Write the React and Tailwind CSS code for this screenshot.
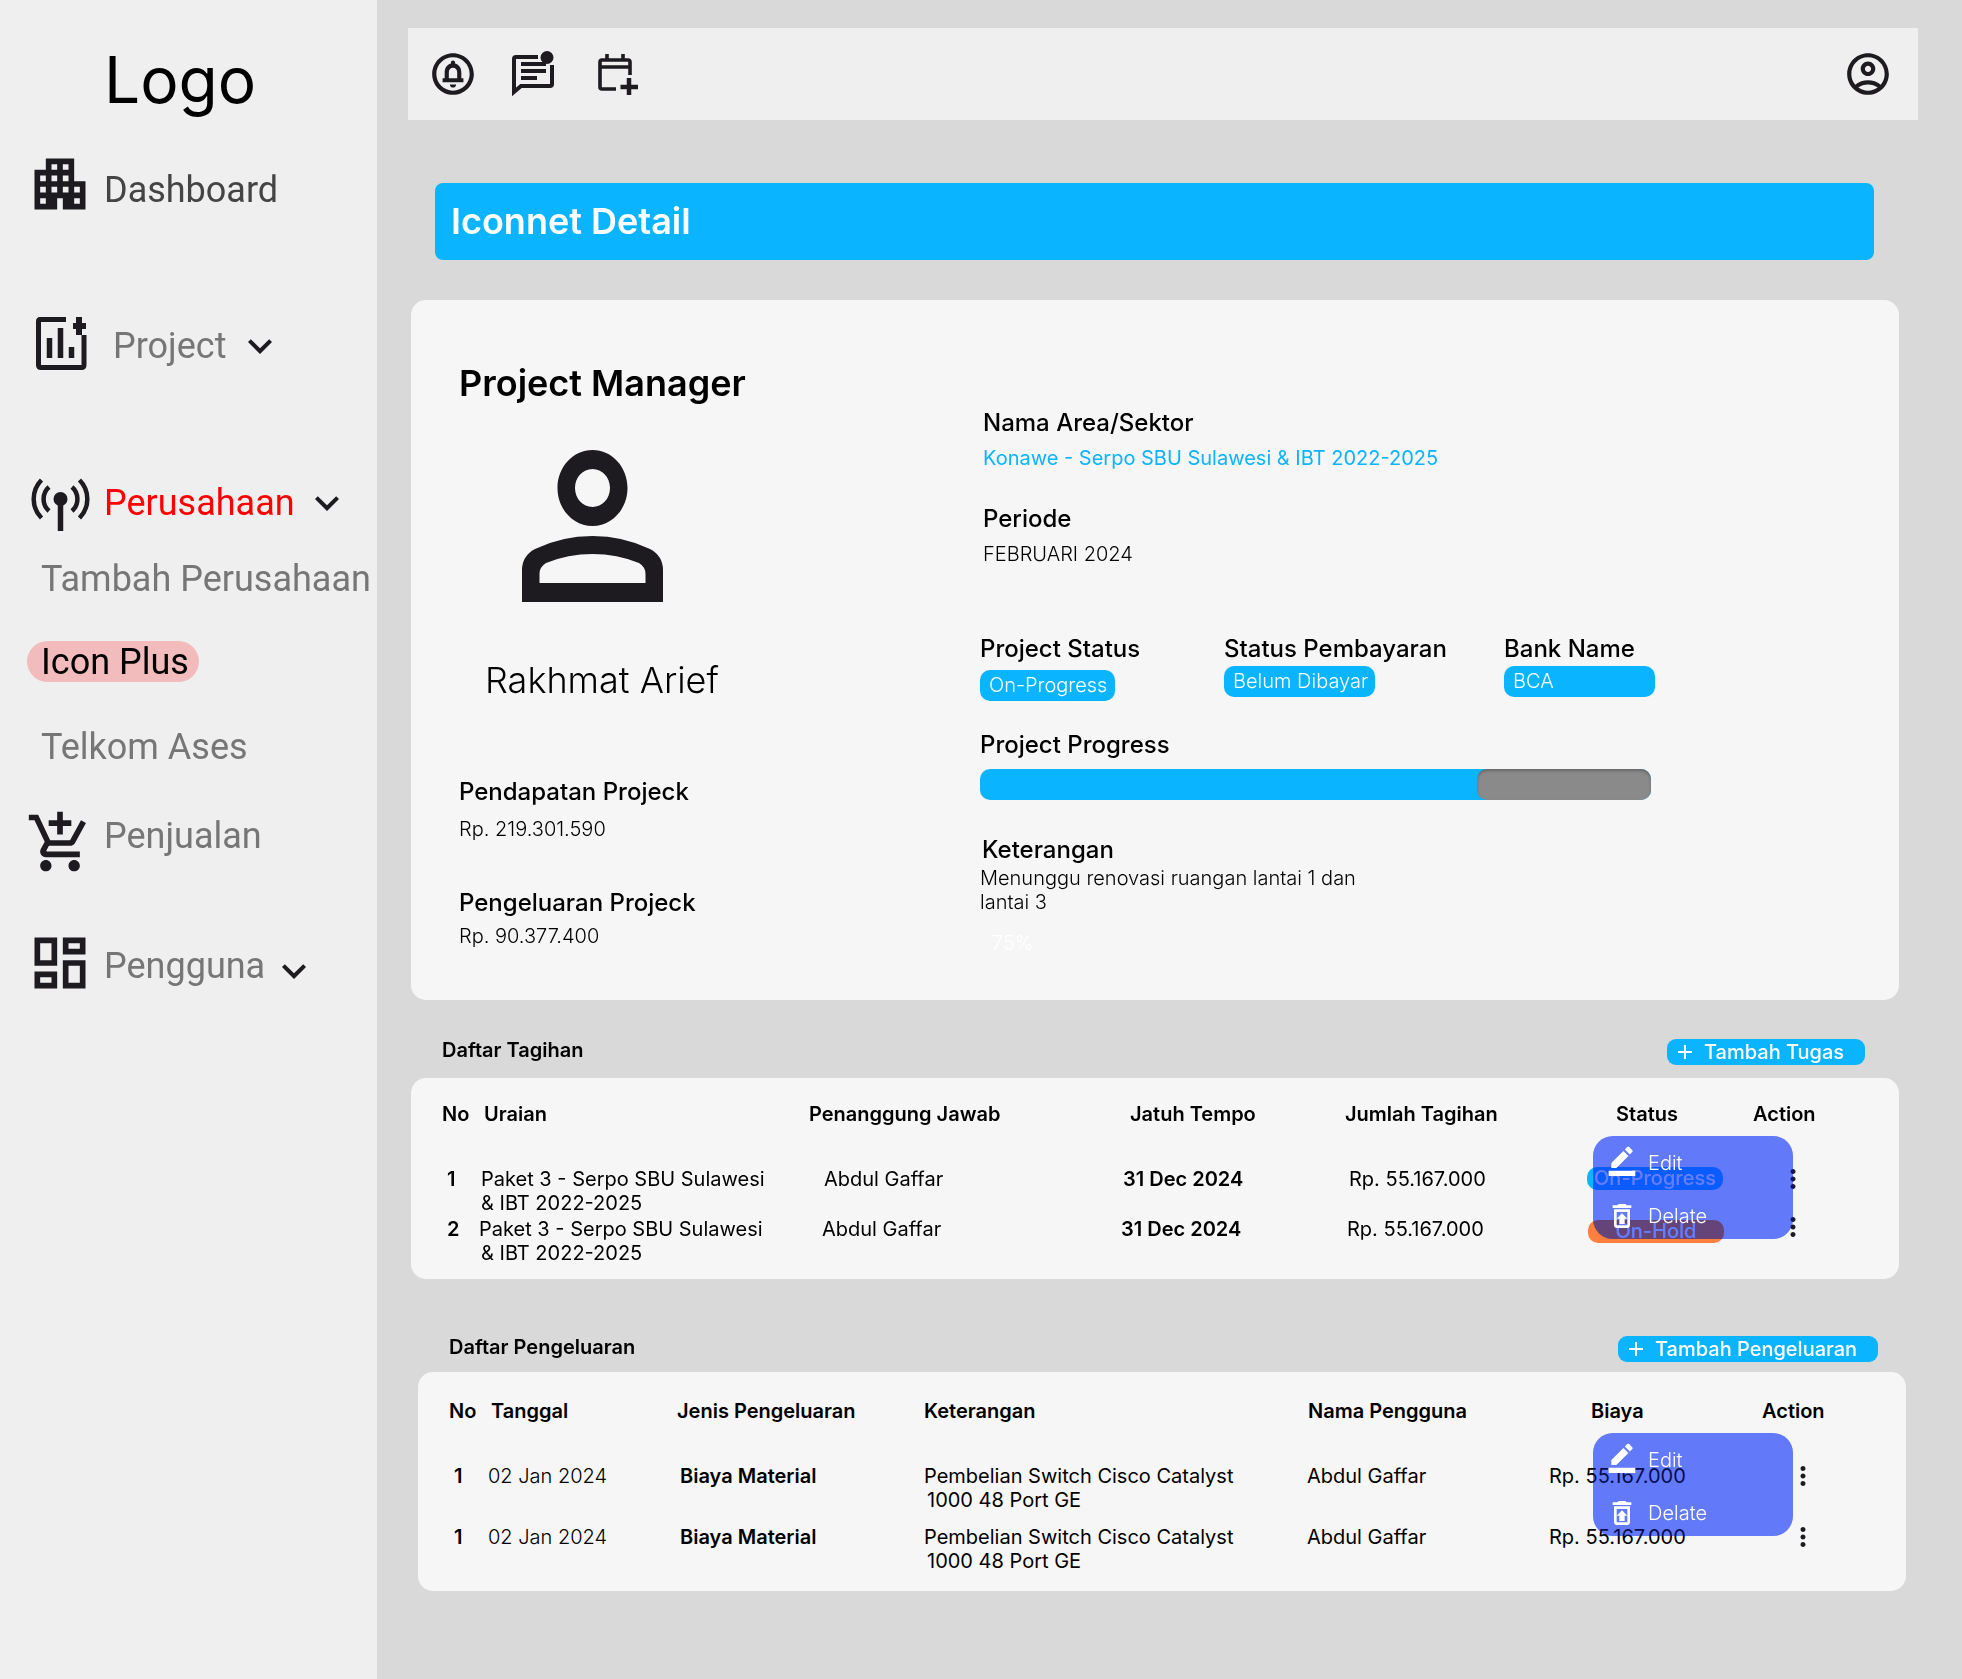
import React from 'react';
import {
  MdApartment,
  MdAddShoppingCart,
  MdOutlineDashboard,
  MdKeyboardArrowDown,
  MdOutlineCircleNotifications,
  MdOutlineAccountCircle,
  MdAdd,
  MdMoreVert,
  MdBorderColor,
  MdOutlineRestoreFromTrash,
} from 'react-icons/md';

const ICON = '#1d1b20';

const ChartAddIcon = () => (
  <svg width="68" height="68" viewBox="0 0 68 68" fill="none" stroke={ICON} className="shrink-0">
    <path d="M40 10.500H14Q12.500 10.500 12.500 12.500V56Q12.500 58.500 15 58.500H55.500Q58 58.500 58 56V26" strokeWidth="5" />
    <path d="M23.500 29V49M34.500 19V49M45.500 38V49" strokeWidth="5.500" />
    <path d="M53 8V26M47 17H60" strokeWidth="6" />
  </svg>
);

const AntennaIcon = () => (
  <svg width="68" height="68" viewBox="-6 -7 68 68" fill="none" stroke={ICON} strokeWidth="4.500" className="shrink-0">
    <path d="M9.500 3A27 27 0 0 0 9.500 41M47.500 3A27 27 0 0 1 47.500 41" />
    <path d="M17 10A16 16 0 0 0 17 34M40 10A16 16 0 0 1 40 34" />
    <circle cx="28.500" cy="22" r="7" fill={ICON} stroke="none" />
    <path d="M28.500 24V54" strokeWidth="5.500" />
  </svg>
);

const NavRow = ({ icon, label, top, chevron }) => (
  <div className={`flex items-center ml-[26px] h-[68px] ${top}`}>
    {icon}
    {label}
    {chevron && <MdKeyboardArrowDown size={48} color={ICON} className={`shrink-0 ${chevron}`} />}
  </div>
);

const Sidebar = () => (
  <aside className="w-[377px] shrink-0 bg-[#efefef] pt-[41px]">
    <div className="ml-[104px] text-[64px] leading-[78px] text-black">Logo</div>
    <div className="font-['Roboto',sans-serif]">
      <NavRow icon={<MdApartment size={68} color={ICON} className="shrink-0" />} top="mt-[31px]" label={<span className="ml-[10px] mt-[12px] text-[36px] leading-[44px] text-[#444444]">Dashboard</span>} />
      <NavRow icon={<ChartAddIcon />} top="mt-[91px]" chevron="ml-[10px] mt-[6px]" label={<span className="ml-[19px] mt-[6px] text-[36px] leading-[44px] text-[#767676]">Project</span>} />
      <NavRow icon={<AntennaIcon />} top="mt-[93px]" chevron="ml-[8px] mt-[-3px]" label={<span className="ml-[10px] mt-[-3px] text-[36px] leading-[44px] text-[#ff0000]">Perusahaan</span>} />
      <div className="ml-[41px] mt-[19px] text-[36px] leading-[44px] text-[#767676] whitespace-nowrap">Tambah Perusahaan</div>
      <div className="ml-[27px] mt-[40px] w-[172px] h-[41px] rounded-full bg-[#f2bcbc] px-[14px] text-[36px] leading-[43px] text-black whitespace-nowrap">Icon Plus</div>
      <div className="ml-[41px] mt-[43px] text-[36px] leading-[44px] text-[#767676]">Telkom Ases</div>
      <NavRow icon={<MdAddShoppingCart size={68} color={ICON} className="shrink-0" />} top="mt-[40px]" label={<span className="ml-[10px] mt-[-14px] text-[36px] leading-[44px] text-[#767676]">Penjualan</span>} />
      <NavRow icon={<MdOutlineDashboard size={68} color={ICON} className="shrink-0" />} top="mt-[52px]" chevron="ml-[5px] mt-[16px]" label={<span className="ml-[10px] mt-[6px] text-[36px] leading-[44px] text-[#767676]">Pengguna</span>} />
    </div>
  </aside>
);

const CommentIcon = () => (
  <svg width="42" height="46" viewBox="0 0 42 46" fill="none" stroke={ICON} className="ml-[34px] shrink-0">
    <path d="M26 6H4Q2 6 2 8V41L9 35H38Q40 35 40 33V14" strokeWidth="4" />
    <path d="M9 13H34M9 20H34M9 27H25" strokeWidth="4" />
    <circle cx="35" cy="6.500" r="6.500" fill={ICON} stroke="none" />
  </svg>
);

const CalendarIcon = () => (
  <svg width="40" height="42" viewBox="0 0 40 42" fill="none" stroke={ICON} strokeWidth="3.600" className="ml-[44px] shrink-0">
    <path d="M18 36H4Q2 36 2 34V9Q2 7 4 7H30Q32 7 32 9V22" />
    <path d="M2 14H32M9 1V7M25 1V7" />
    <path d="M31 25V42M22.500 34H40" strokeWidth="4.500" />
  </svg>
);

const Topbar = () => (
  <div className="ml-[31px] mt-[28px] w-[1510px] h-[92px] bg-[#efefef] flex items-center pl-[20px] pr-[25px]">
    <MdOutlineCircleNotifications size={50} color={ICON} className="shrink-0" />
    <CommentIcon />
    <CalendarIcon />
    <MdOutlineAccountCircle size={50} color={ICON} className="ml-auto shrink-0" />
  </div>
);

const Avatar = () => (
  <svg width="141" height="152" viewBox="0 0 141 152" fill={ICON} fillRule="evenodd" className="ml-[63px] mt-[45px]">
    <path d="M70.500 0C90 0 105.500 17 105.500 38S90 76 70.500 76 35.500 59 35.500 38 51 0 70.500 0ZM70.500 19C60.800 19 53 27.500 53 38S60.800 57 70.500 57 88 48.500 88 38 80.200 19 70.500 19Z" />
    <path d="M0 152V120Q0 106 13 99Q40 86 70.500 86Q101 86 128 99Q141 106 141 120V152ZM17.500 133H123.500V124Q123.500 117 117 113Q95 104 70.500 104Q46 104 24 113Q17.500 117 17.500 124Z" />
  </svg>
);

const Label = ({ children, className = '' }) => (
  <div className={`text-[24px] leading-[28px] font-medium text-black ${className}`}>{children}</div>
);

const Value = ({ children, className = '' }) => (
  <div className={`text-[20px] leading-[24px] ${className}`}>{children}</div>
);

const Pill = ({ children, className = '' }) => (
  <div className={`h-[31px] rounded-[10px] bg-[#0ab4ff] pl-[9px] text-[20px] leading-[31px] font-light text-white ${className}`}>{children}</div>
);

const DetailCard = () => (
  <div className="ml-[34px] mt-[40px] w-[1488px] h-[700px] rounded-[15px] bg-[#f6f6f6] flex">
    <div className="w-[569px] pl-[48px] pt-[61px]">
      <div className="text-[36px] leading-[44px] font-semibold text-black">Project Manager</div>
      <Avatar />
      <div className="ml-[26px] mt-[56px] text-[36px] leading-[44px] font-light text-black">Rakhmat Arief</div>
      <Label className="mt-[76px]">Pendapatan Projeck</Label>
      <Value className="mt-[11px] font-light text-black">Rp. 219.301.590</Value>
      <Label className="mt-[48px]">Pengeluaran Projeck</Label>
      <Value className="mt-[7px] font-light text-black">Rp. 90.377.400</Value>
    </div>
    <div className="flex-1 pt-[109px]">
      <Label className="ml-[3px]">Nama Area/Sektor</Label>
      <Value className="ml-[3px] mt-[9px] text-[#0ab4ff]">Konawe - Serpo SBU Sulawesi &amp; IBT 2022-2025</Value>
      <Label className="ml-[3px] mt-[35px]">Periode</Label>
      <Value className="ml-[3px] mt-[9px] font-light text-black">FEBRUARI 2024</Value>
      <div className="flex mt-[69px]">
        <div className="w-[244px]">
          <Label>Project Status</Label>
          <Pill className="mt-[7px] w-[135px]">On-Progress</Pill>
        </div>
        <div className="w-[280px]">
          <Label>Status Pembayaran</Label>
          <Pill className="mt-[3px] w-[151px] pl-[8px]">Belum Dibayar</Pill>
        </div>
        <div className="w-[151px]">
          <Label>Bank Name</Label>
          <Pill className="mt-[3px] w-[151px] pl-[8px]">BCA</Pill>
        </div>
      </div>
      <Label className="mt-[30px]">Project Progress</Label>
      <div className="mt-[10px] w-[671px] h-[31px] rounded-[10px] bg-[#0ab4ff] flex justify-end">
        <div className="w-[174px] h-full rounded-[10px] bg-[#8a8a8a] shadow-[inset_0_2px_3px_rgba(0,0,0,0.25)]" />
      </div>
      <Label className="ml-[2px] mt-[36px]">Keterangan</Label>
      <Value className="mt-[2px] font-light text-black">Menunggu renovasi ruangan lantai 1 dan<br />lantai 3</Value>
      <Value className="ml-[12px] mt-[17px] font-light text-white">75%</Value>
    </div>
  </div>
);

const SectionHead = ({ title, action, className }) => (
  <div className={`w-[1488px] flex items-center justify-between pl-[31px] ${className}`}>
    <div className="mt-[-5px] text-[20px] leading-[24px] font-semibold text-black">{title}</div>
    {action}
  </div>
);

const AddButton = ({ children, className }) => (
  <div className={`h-[26px] rounded-[9px] bg-[#0ab4ff] flex items-center text-[20px] font-medium text-white ${className}`}>
    <MdAdd size={24} className="shrink-0" />
    <span className="ml-[7px] whitespace-nowrap">{children}</span>
  </div>
);

// the menu tints what lies under it, hence the two stacked layers behind the white text
const ActionMenu = ({ className }) => (
  <div className={`absolute w-[200px] h-[103px] ${className}`}>
    <div className="absolute inset-0 rounded-[20px] bg-[#89a3ff] mix-blend-multiply" />
    <div className="absolute inset-0 rounded-[20px] bg-[#1428ff]/30" />
    <div className="relative pl-[13px] pt-[8px] text-white text-[20px] leading-[24px] font-light">
      <div className="flex items-center h-[32px]">
        <MdBorderColor size={32} className="shrink-0" />
        <span className="ml-[10px] mt-[5px]">Edit</span>
      </div>
      <div className="flex items-center h-[32px] mt-[24px]">
        <MdOutlineRestoreFromTrash size={32} className="shrink-0" />
        <span className="ml-[10px]">Delate</span>
      </div>
    </div>
  </div>
);

const Dots = ({ className = '' }) => <MdMoreVert size={30} color={ICON} className={className} />;

const Badge = ({ children, color, className }) => (
  <div className={`w-[136px] h-[23px] rounded-[10px] text-center text-[20px] leading-[22px] font-medium text-white ${color} ${className}`}>{children}</div>
);

const tagihanHead = ['No', 'Uraian', 'Penanggung Jawab', 'Jatuh Tempo', 'Jumlah Tagihan', 'Status', 'Action'];
const pengeluaranHead = ['No', 'Tanggal', 'Jenis Pengeluaran', 'Keterangan', 'Nama Pengguna', 'Biaya', 'Action'];

const TagihanCard = () => (
  <div className="relative ml-[34px] mt-[13px] w-[1488px] h-[201px] rounded-[15px] bg-[#f6f6f6] pl-[31px] pt-[24px] text-[20px] leading-[24px] text-black">
    <div className="grid grid-cols-[42px_325px_321px_215px_271px_137px_1fr] font-semibold">
      {tagihanHead.map(h => <div key={h}>{h}</div>)}
    </div>
    <div className="grid grid-cols-[34px_343px_299px_226px_238px_136px_55px_30px] ml-[5px] mt-[41px]">
      <div className="font-semibold">1</div>
      <div>Paket 3 - Serpo SBU Sulawesi<br />&amp; IBT 2022-2025</div>
      <div>Abdul Gaffar</div>
      <div className="font-semibold">31 Dec 2024</div>
      <div>Rp. 55.167.000</div>
      <Badge color="bg-[#0ab4ff]">On-Progress</Badge>
      <div />
      <Dots className="mt-[-3px]" />
    </div>
    <div className="grid grid-cols-[32px_343px_299px_226px_241px_136px_52px_30px] ml-[5px] mt-[2px]">
      <div className="font-semibold">2</div>
      <div>Paket 3 - Serpo SBU Sulawesi<br /><span className="ml-[2px]">&amp; IBT 2022-2025</span></div>
      <div>Abdul Gaffar</div>
      <div className="font-semibold">31 Dec 2024</div>
      <div>Rp. 55.167.000</div>
      <Badge color="bg-[#ff7f3f]" className="mt-[3px]">On-Hold</Badge>
      <div />
      <Dots className="mt-[-5px] ml-[2px]" />
    </div>
    <ActionMenu className="left-[1182px] top-[58px]" />
  </div>
);

const PengeluaranRow = ({ className }) => (
  <div className={`grid grid-cols-[34px_192px_244px_383px_242px_239px_30px] ml-[5px] ${className}`}>
    <div className="font-semibold">1</div>
    <div className="font-light">02 Jan 2024</div>
    <div className="font-semibold">Biaya Material</div>
    <div>Pembelian Switch Cisco Catalyst<br /><span className="ml-[3px]">1000 48 Port GE</span></div>
    <div>Abdul Gaffar</div>
    <div>Rp. 55.167.000</div>
    <Dots className="mt-[-3px]" />
  </div>
);

const PengeluaranCard = () => (
  <div className="relative ml-[41px] mt-[10px] w-[1488px] h-[219px] rounded-[15px] bg-[#f6f6f6] pl-[31px] pt-[27px] text-[20px] leading-[24px] text-black">
    <div className="grid grid-cols-[42px_186px_247px_384px_283px_171px_1fr] font-semibold">
      {pengeluaranHead.map(h => <div key={h}>{h}</div>)}
    </div>
    <PengeluaranRow className="mt-[41px]" />
    <PengeluaranRow className="mt-[13px]" />
    <ActionMenu className="left-[1175px] top-[61px]" />
  </div>
);

export default function App() {
  return (
    <div className="flex w-[1962px] min-h-[1679px] bg-[#d9d9d9] font-['Inter',sans-serif]">
      <Sidebar />
      <main className="flex-1">
        <Topbar />
        <div className="ml-[58px] mt-[63px] w-[1439px] h-[77px] rounded-[8px] bg-[#0ab4ff] pl-[16px] text-[36px] leading-[76px] font-semibold text-white">Iconnet Detail</div>
        <DetailCard />
        <SectionHead
          title="Daftar Tagihan"
          className="ml-[34px] mt-[39px] pr-[34px]"
          action={<AddButton className="w-[198px] pl-[6px]">Tambah Tugas</AddButton>}
        />
        <TagihanCard />
        <SectionHead
          title="Daftar Pengeluaran"
          className="ml-[41px] mt-[57px] pr-[28px]"
          action={<AddButton className="w-[260px] pl-[6px]">Tambah Pengeluaran</AddButton>}
        />
        <PengeluaranCard />
      </main>
    </div>
  );
}
